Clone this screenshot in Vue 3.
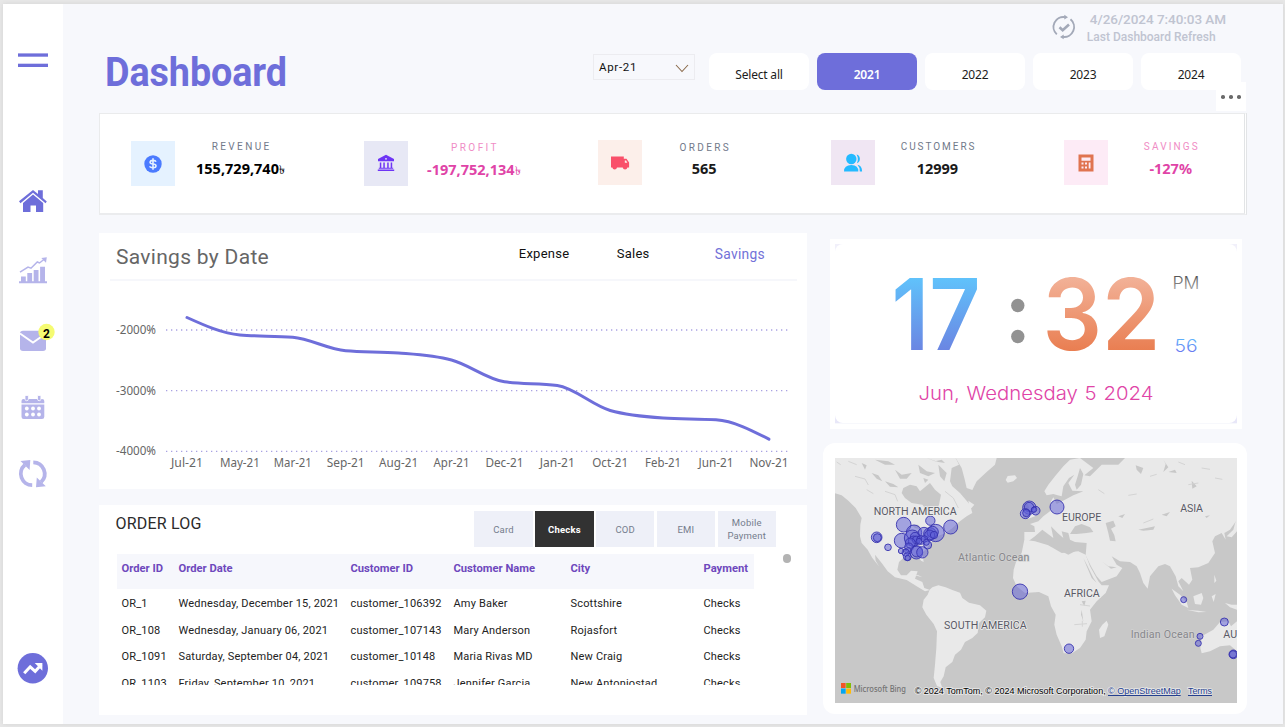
<script setup>
const years = ['Select all', '2021', '2022', '2023', '2024']

const kpis = [
  { icon: 'coin', label: 'REVENUE', value: '155,729,740', taka: true, tone: 'ink' },
  { icon: 'bank', label: 'PROFIT', value: '-197,752,134', taka: true, tone: 'pink' },
  { icon: 'truck', label: 'ORDERS', value: '565', tone: 'ink' },
  { icon: 'people', label: 'CUSTOMERS', value: '12999', tone: 'ink' },
  { icon: 'calc', label: 'SAVINGS', value: '-127%', tone: 'pink' },
]

const points = [
  { label: 'Jul-21', w: 32, y: 317.5 },
  { label: 'May-21', w: 40, y: 335 },
  { label: 'Mar-21', w: 38, y: 337.3 },
  { label: 'Sep-21', w: 38, y: 350.8 },
  { label: 'Aug-21', w: 39, y: 353 },
  { label: 'Apr-21', w: 36, y: 360 },
  { label: 'Dec-21', w: 38, y: 381.8 },
  { label: 'Jan-21', w: 35, y: 385.6 },
  { label: 'Oct-21', w: 36, y: 410.5 },
  { label: 'Feb-21', w: 36, y: 418 },
  { label: 'Jun-21', w: 35, y: 419.8 },
  { label: 'Nov-21', w: 39, y: 439.2 },
].map((p, i) => ({ ...p, x: 187 + i * 52.9 }))

// Monotone cubic interpolation through the points
function smooth(pts) {
  const n = pts.length
  const s = []
  for (let i = 0; i < n - 1; i++) s.push((pts[i + 1].y - pts[i].y) / (pts[i + 1].x - pts[i].x))
  const m = pts.map((_, i) => {
    if (i === 0 || i === n - 1) return null
    const a = s[i - 1]
    const b = s[i]
    if (a * b <= 0) return 0
    return Math.sign(a) * 2 * Math.min(Math.abs(a), Math.abs(b), Math.abs(a + b) / 4)
  })
  m[0] = (3 * s[0] - m[1]) / 2
  m[n - 1] = (3 * s[n - 2] - m[n - 2]) / 2
  let d = `M${pts[0].x},${pts[0].y}`
  for (let i = 1; i < n; i++) {
    const h = (pts[i].x - pts[i - 1].x) / 3
    d += `C${pts[i - 1].x + h},${pts[i - 1].y + m[i - 1] * h} ${pts[i].x - h},${pts[i].y - m[i] * h} ${pts[i].x},${pts[i].y}`
  }
  return d
}
const line = smooth(points)

const grid = [
  { y: 330, label: '-2000%' },
  { y: 390.6, label: '-3000%' },
  { y: 451.3, label: '-4000%' },
]

const methods = ['Card', 'Checks', 'COD', 'EMI', 'Mobile Payment']
const columns = ['Order ID', 'Order Date', 'Customer ID', 'Customer Name', 'City', 'Payment']
const orders = [
  ['OR_1', 'Wednesday, December 15, 2021', 'customer_106392', 'Amy Baker', 'Scottshire', 'Checks'],
  ['OR_108', 'Wednesday, January 06, 2021', 'customer_107143', 'Mary Anderson', 'Rojasfort', 'Checks'],
  ['OR_1091', 'Saturday, September 04, 2021', 'customer_10148', 'Maria Rivas MD', 'New Craig', 'Checks'],
  ['OR_1103', 'Friday, September 10, 2021', 'customer_109758', 'Jennifer Garcia', 'New Antoniostad', 'Checks'],
]

const bubbles = [
  [206, 200, 22], [286, 188, 14], [347, 207, 21], [302, 225, 26], [125, 238, 16], [127, 239, 12], [159, 268, 10],
  [200, 248, 22], [237, 224, 23], [232, 240, 24], [267, 226, 18], [285, 228, 19], [293, 222, 17], [284, 231, 15],
  [297, 231, 11], [240, 237, 14], [236, 250, 16], [244, 246, 12], [226, 255, 15], [222, 268, 13], [258, 246, 13],
  [268, 243, 10], [252, 250, 9], [278, 261, 12], [274, 253, 9], [219, 279, 10], [212, 284, 11], [198, 279, 8],
  [217, 296, 12], [218, 300, 8], [244, 284, 19], [246, 280, 17], [262, 283, 17],
  [583, 149, 20], [582, 147, 14], [571, 167, 15], [574, 165, 11], [602, 158, 13], [597, 155, 8], [666, 147, 21],
  [555, 401, 23], [702, 572, 14], [1046, 425, 9], [1168, 492, 12], [1095, 535, 9], [1090, 556, 9],
  [1195, 589, 13], [1194, 589, 11],
]
</script>

<template>
  <div class="screen">
    <div class="frame">
      <nav class="side">
        <svg width="60" height="720" viewBox="3 4 60 720">
          <g fill="#6e6eda">
            <rect x="18" y="53.4" width="30" height="3.3" />
            <rect x="18" y="63.7" width="30" height="3.3" />
            <path d="M19 201.3 33 190l5 4V190.300h4.800V198l4 3.500-1.300 1.800L33 192.800l-12.500 10.400z" />
            <path d="M33 194.500 43.200 203v9H36v-6.500h-5.500V212H23v-9z" />
          </g>
          <g fill="#b5b4ea">
            <path d="M19 281.200h28v2H19zM21 276.500h4.800v6H21zM27.300 273h4.800v9h-4.800zM33.700 270h4.800v12h-4.800zM40.100 266.800h4.900v15h-4.900z" />
            <path d="M20 272.200 28 267l3 1.200 6.300-6.200 2.200 1 5-4" fill="none" stroke="#b5b4ea" stroke-width="1.500" />
            <path d="M41.300 258l5.500-.8-.8 5.600z" />
            <path d="M20 333.500q0-2.800 3-2.800h20q3 0 3 2.800v14.800q0 2.700-3 2.700H23q-3 0-3-2.700z" />
            <path d="M21.500 401q0-2 2-2H42q2.300 0 2.300 2v2.200H21.500zM21.500 404.500h22.800v12.300q0 2.200-2.300 2.200H23.700q-2.200 0-2.200-2.200z" />
            <path d="M25 395.500h3.400v3.700q0 1.500-1.700 1.500t-1.700-1.500zM37.500 395.500h3.400v3.700q0 1.500-1.700 1.500t-1.700-1.500z" stroke="#fff" stroke-width=".8" />
          </g>
          <path d="M20 333.500 33 342.500 46 333.500" fill="none" stroke="#fff" stroke-width="1.900" />
          <g fill="#fff">
            <circle cx="26.800" cy="408.500" r="1.900" /><circle cx="33" cy="408.500" r="1.900" /><circle cx="39" cy="408.500" r="1.900" />
            <circle cx="26.800" cy="414.500" r="1.900" /><circle cx="33" cy="414.500" r="1.900" /><circle cx="39" cy="414.500" r="1.900" />
          </g>
          <circle cx="46.500" cy="332" r="8.200" fill="#f5fb72" />
          <text class="badge" x="46.500" y="337.500" text-anchor="middle">2</text>
          <g fill="none" stroke="#b5b4ea" stroke-width="3.800">
            <path d="M32.200 485.200A11.500 11.500 0 0 1 24.800 465" />
            <path d="M33.300 462.300A11.500 11.500 0 0 1 41.200 482" />
          </g>
          <path d="M20.500 461 30.300 460 29.600 470zM45.800 486.200 36 487.300 36.800 477.500z" fill="#b5b4ea" />
          <circle cx="32.800" cy="668.200" r="15.200" fill="#6e6eda" />
          <path d="M24.200 673.300l6-6.500 5 4.500 6-6.500" fill="none" stroke="#fff" stroke-width="3" />
          <path d="M34.700 663h7.700v7.700z" fill="#fff" />
        </svg>
      </nav>

      <main class="main">
        <header class="head">
          <h1>Dashboard</h1>
          <div class="right">
            <div class="refresh">
              <svg width="24" height="26" viewBox="0 0 24 26">
                <g fill="none" stroke="#a3a9b8" stroke-width="1.900">
                  <path d="M4.800 20.400A10 10 0 0 1 13 3.100" /><path d="M18.500 5.300A10 10 0 0 1 11 22.900" />
                  <path d="M7.500 13.200l3.200 3 6.300-5.700" stroke-width="2.600" />
                </g>
                <path d="M12.300.8 16 3.200 12.300 5.500zM11.700 20.500 8 22.900l3.700 2.300z" fill="#a3a9b8" />
              </svg>
              <div>
                <p class="stamp">4/26/2024 7:40:03 AM</p>
                <p class="note">Last Dashboard Refresh</p>
              </div>
            </div>
            <div class="filters">
              <div class="select">
                <span>Apr-21</span>
                <svg width="14" height="9" viewBox="0 0 14 9"><path d="M1 1l6 6.500L13 1" fill="none" stroke="#8a6a4a" stroke-width="1.100" /></svg>
              </div>
              <button v-for="y in years" :key="y" class="year" :class="{ on: y === '2021' }">{{ y }}</button>
            </div>
          </div>
          <div class="more"><i></i><i></i><i></i></div>
        </header>

        <section class="kpis">
          <div v-for="k in kpis" :key="k.label" class="kpi" :class="k.icon">
            <div class="tile">
              <svg v-if="k.icon === 'coin'" width="18" height="18" viewBox="0 0 18 18">
                <circle cx="9" cy="9" r="8.700" fill="#4b7bff" />
                <path d="M12 6.700Q11.600 5.400 9 5.400T6.100 7.200Q6.100 8.800 9 9t3 1.900q0 1.700-3 1.700T5.900 11.200M9 3.300v11.400" fill="none" stroke="#e5f2ff" stroke-width="1.600" />
              </svg>
              <svg v-else-if="k.icon === 'bank'" width="18" height="18" viewBox="0 0 18 18">
                <path d="M9 .8 17 5v2.300H1V5zM2.800 8.400h1.500v5.400H2.800zM6.300 8.400h1.500v5.400H6.300zM10.200 8.400h1.500v5.400h-1.500zM13.700 8.400h1.500v5.400h-1.500zM1.800 13.800h14.400v1H1.800zM.8 15.600h16.400V17H.8z" fill="#6e35f5" />
                <circle cx="9" cy="4.800" r=".9" fill="#e7e8f5" />
              </svg>
              <svg v-else-if="k.icon === 'truck'" width="20" height="16" viewBox="0 0 20 16">
                <path d="M1 1.500h12.800v2.300h2.700l2.600 3.800v5h-1.700a2.400 2.400 0 0 1-4.700 0H7a2.400 2.400 0 0 1-4.700 0H1z" fill="#f9506a" />
                <path d="M14.800 5.500h1.300l1.300 2.200h-2.600z" fill="#fcefea" />
              </svg>
              <svg v-else-if="k.icon === 'people'" width="20" height="20" viewBox="0 0 20 20">
                <circle cx="8.300" cy="6" r="5.200" fill="#24baff" />
                <path d="M1 18.500q0-6.500 7.300-6.500t7 6.500z" fill="#24baff" />
                <path d="M13.600 1.600a4.600 4.600 0 0 1 .3 8.700q2-4.300-.3-8.700zM14.500 11.800q4.500.8 4.600 6.700h-2.300q0-4.400-2.300-6.700z" fill="#24baff" />
              </svg>
              <svg v-else width="16" height="18" viewBox="0 0 16 18">
                <rect x=".5" y=".5" width="15" height="17" fill="#e07450" />
                <path d="M3.500 3.500h9v3.300h-9zM3.500 8.500h2v2h-2zM7 8.500h2v2H7zM3.500 12.500h2v2h-2zM7 12.500h2v2H7zM10.700 8.500h1.800v6h-1.800z" fill="#fdebf4" />
              </svg>
            </div>
            <div class="fig" :class="k.tone">
              <p class="label">{{ k.label }}</p>
              <p class="value">{{ k.value }}<span v-if="k.taka" class="taka">৳</span></p>
            </div>
          </div>
        </section>

        <div class="body">
          <div class="col">
            <section class="card chart">
              <div class="chart-head">
                <h2>Savings by Date</h2>
                <div class="tabs"><span>Expense</span><span>Sales</span><span class="on">Savings</span></div>
              </div>
              <svg width="708" height="208" viewBox="99 281 708 208">
                <g v-for="g in grid" :key="g.y">
                  <path :d="`M166 ${g.y}H788`" stroke="#a9a2e2" stroke-width="1.300" stroke-dasharray="1.300 3.700" />
                  <text x="116" :y="g.y + 4" textLength="40" lengthAdjust="spacingAndGlyphs">{{ g.label }}</text>
                </g>
                <path :d="line" fill="none" stroke="#6e6eda" stroke-width="3" stroke-linecap="round" />
                <text v-for="p in points" :key="p.label" :x="p.x" y="467" text-anchor="middle" :textLength="p.w" lengthAdjust="spacingAndGlyphs">{{ p.label }}</text>
              </svg>
            </section>

            <section class="card log">
              <div class="log-head">
                <h3>ORDER LOG</h3>
                <div class="methods">
                  <button v-for="m in methods" :key="m" :class="{ on: m === 'Checks' }">{{ m }}</button>
                </div>
              </div>
              <div class="log-body">
                <div class="table">
                  <div class="row th"><span v-for="c in columns" :key="c">{{ c }}</span></div>
                  <div v-for="o in orders" :key="o[0]" class="row"><span v-for="(c, i) in o" :key="i">{{ c }}</span></div>
                </div>
                <i class="thumb"></i>
              </div>
            </section>
          </div>

          <div class="col2">
            <section class="clock">
              <div class="face">
                <svg width="402" height="179" viewBox="835.500 244 402 179">
                  <defs>
                    <linearGradient id="gh" gradientUnits="userSpaceOnUse" x1="0" y1="278" x2="0" y2="352"><stop offset="0" stop-color="#60c2fb" /><stop offset="1" stop-color="#6b84e2" /></linearGradient>
                    <linearGradient id="gm" gradientUnits="userSpaceOnUse" x1="0" y1="278" x2="0" y2="352"><stop offset="0" stop-color="#f2b197" /><stop offset="1" stop-color="#e97d50" /></linearGradient>
                    <linearGradient id="gp" gradientUnits="userSpaceOnUse" x1="0" y1="276" x2="0" y2="291"><stop offset="0" stop-color="#555" /><stop offset="1" stop-color="#aaa" /></linearGradient>
                    <linearGradient id="gs" gradientUnits="userSpaceOnUse" x1="0" y1="338" x2="0" y2="353"><stop offset="0" stop-color="#5cb4fc" /><stop offset="1" stop-color="#6b75f0" /></linearGradient>
                  </defs>
                  <text class="big" x="892" y="350" textLength="89" lengthAdjust="spacingAndGlyphs" fill="url(#gh)">17</text>
                  <circle cx="1018.300" cy="305.500" r="6.700" fill="#929292" />
                  <circle cx="1018.300" cy="336.500" r="6.700" fill="#929292" />
                  <text class="big" x="1043" y="349.500" textLength="118" lengthAdjust="spacingAndGlyphs" fill="url(#gm)">32</text>
                  <text class="thin" x="1173" y="289" textLength="27" lengthAdjust="spacingAndGlyphs" fill="url(#gp)">PM</text>
                  <text class="thin" x="1175" y="352" textLength="23" lengthAdjust="spacingAndGlyphs" fill="url(#gs)">56</text>
                  <text class="date" x="919" y="400" textLength="235" lengthAdjust="spacingAndGlyphs">Jun, Wednesday 5 2024</text>
                </svg>
              </div>
            </section>

            <section class="mapcard">
              <svg width="402" height="245" viewBox="0 0 1206 735">
                <rect width="1206" height="735" fill="#c8c8c8" />
                <g fill="#e9e9e9">
                  <path d="M0 0H362L372 20 350 30 345 70 352 85 375 105 405 140 412 165 395 175 368 195 350 212 325 228 305 235 290 252 278 268 262 285 266 312 258 308 248 292 225 292 205 300 192 312 187 335 198 352 215 352 228 338 248 340 240 362 262 372 268 390 285 396 270 400 245 385 215 366 180 358 158 340 140 315 120 290 122 308 132 325 112 300 98 275 80 255 75 235 76 200 80 180 62 150 40 128 20 112 0 106z" />
                  <path d="M362 0 380 30 388 60 395 90 412 96 425 70 455 42 480 20 485 0z" />
                  <path d="M512 66 518 54 540 52 546 60 535 70 518 74zM292 388 310 382 332 388 352 396 375 404 382 420 402 434 435 442 454 458 450 478 432 495 428 525 412 540 390 552 378 575 360 590 352 612 332 628 326 655 316 672 322 690 306 684 296 660 300 620 304 570 306 520 296 498 274 470 262 448 266 425 278 410 284 395z" />
                  <path d="M568 245 600 250 640 262 680 285 730 280 752 290 765 325 790 370 800 382 822 382 812 405 785 430 765 455 770 490 755 520 752 545 735 570 712 585 686 586 680 565 665 530 658 500 662 470 648 445 640 415 612 402 570 405 545 385 534 360 536 335 545 305 560 285z" />
                  <path d="M568 222 600 222 598 205 585 198 610 190 625 175 645 160 648 130 655 118 665 138 690 125 715 112 745 100 712 98 700 75 718 50 702 60 685 85 680 115 668 112 655 108 635 112 628 100 640 80 660 55 685 25 705 5 735 0 775 30 748 52 765 55 800 20 850 20 870 0H1206V185L1185 215 1168 225 1172 245 1160 225 1140 235 1132 250 1140 285 1120 315 1090 328 1065 330 1072 365 1062 380 1040 360 1030 370 1045 400 1030 385 1022 355 1005 325 990 318 970 325 945 355 938 392 925 375 915 345 905 325 885 312 855 310 830 295 845 320 862 330 845 355 800 372 785 355 768 325 752 292 755 255 720 252 705 245 700 225 680 220 685 240 668 225 648 205 655 240 635 225 622 215 600 235 580 250 568 245z" />
                  <path d="M580 182 600 175 608 160 592 140 588 128 575 132 582 148 575 168zM555 160 568 150 575 165 560 178zM815 488 820 500 808 535 795 540 792 515 802 500zM1010 392 1035 410 1055 432 1060 450 1040 440 1020 412zM1075 415 1100 405 1105 420 1098 440 1080 438zM1055 455 1090 458 1115 462 1090 463zM1170 435 1190 440 1206 440V455L1185 448zM1100 535 1135 515 1155 492 1180 490 1188 505 1206 490V580L1185 562 1155 565 1125 580 1100 586 1096 570z" />
                  <path d="M222 348 250 352 262 358 240 352zM1130 415 1142 408 1136 432zM1138 350 1144 368 1138 375zM400 128 418 140 405 155zM1175 235 1195 215 1206 175V220L1190 238z" />
                </g>
                <g fill="#c8c8c8">
                  <path d="M205 90 225 80 245 85 255 100 285 75 300 95 318 110 312 140 300 165 278 160 262 140 230 135 210 120 200 105z" />
                  <path d="M110 45 130 52 142 70 125 62zM150 70 175 78 190 88 165 86zM180 35 200 50 230 45 215 62 195 62zM250 20 275 40 300 45 280 55 255 45zM310 20 335 45 328 70 315 55zM80 15 95 22 90 35zM120 5 160 10 180 20 150 20zM265 60 280 65 270 75zM230 200 250 200 262 215 240 210zM275 0 300 10 320 5 330 15 310 12z" />
                  <path d="M705 228 720 205 740 198 765 208 775 222 755 225 725 228zM812 195 835 188 842 205 828 212 838 232 842 250 825 248 820 225zM745 300 758 325 775 360 785 374 770 360 755 325zM800 310 820 325 845 328 828 332zM640 262 690 262 720 280 700 290 660 270zM735 30 745 48 738 80 725 95 720 80 728 55z" />
                  <path d="M740 430 752 428 748 445zM740 455 745 490 738 470zM850 175 870 168 862 180zM910 215 960 205 955 215 925 218zM980 170 1005 162 995 175zM1070 68 1085 85 1072 92zM985 5 1000 28 985 42 992 18zM902 22 925 30 918 48 905 35zM1110 175 1125 172 1115 180zM1000 42 1020 35 1025 45z" />
                </g>
                <g fill="none" stroke="#d4d4d4" stroke-width="3">
                  <path d="M5 12l12 8M40 10l25 10M60 55l30 8 10 18M150 100l30 10 8 20M95 95l20 12M330 100l25 20 15 30M1030 12l20 8M1100 30l25 4M945 55l20-6M880 112l25-4M1060 80l30-5M790 95l18 12M925 195l30-12M1140 60l22 4M735 440l30 4M718 500l38-3M742 488v18" />
                </g>
                <g fill="#5c5cd6" fill-opacity=".5" stroke="#342fae" stroke-width="2.600">
                  <circle v-for="(b, i) in bubbles" :key="i" :cx="b[0]" :cy="b[1]" :r="b[2]" />
                </g>
                <g class="land">
                  <text x="116" y="172" textLength="249">NORTH AMERICA</text>
                  <text x="327" y="514" textLength="248">SOUTH AMERICA</text>
                  <text x="681" y="189" textLength="118">EUROPE</text>
                  <text x="1036" y="161" textLength="68">ASIA</text>
                  <text x="687" y="418" textLength="107">AFRICA</text>
                  <text x="1165" y="540">AU</text>
                </g>
                <g class="sea">
                  <text x="369" y="308" textLength="214">Atlantic Ocean</text>
                  <text x="887" y="539" textLength="192">Indian Ocean</text>
                </g>
                <path d="M18 675h14v15H18z" fill="#f35325" /><path d="M33.500 675H48v15H33.500z" fill="#81bc06" />
                <path d="M18 691.500h14V707H18z" fill="#05a6f0" /><path d="M33.500 691.500H48V707H33.500z" fill="#ffba08" />
                <text class="bing" x="56" y="701" textLength="157" lengthAdjust="spacingAndGlyphs">Microsoft Bing</text>
                <g class="copy">
                  <text x="239" y="708" textLength="573" lengthAdjust="spacingAndGlyphs">© 2024 TomTom, © 2024 Microsoft Corporation,</text>
                  <text class="link" x="819" y="708" textLength="218" lengthAdjust="spacingAndGlyphs">© OpenStreetMap</text>
                  <text class="link" x="1059" y="708" textLength="72" lengthAdjust="spacingAndGlyphs">Terms</text>
                </g>
                <path d="M819 712.500H1037M1059 712.500H1131" stroke="#25408f" stroke-width="3" />
              </svg>
            </section>
          </div>
        </div>
      </main>
    </div>
  </div>
</template>

<style>
body { margin: 0; overflow: hidden; }
</style>

<style scoped>
.screen, .screen * { box-sizing: border-box; }
.screen { width: 1285px; height: 727px; padding: 4px 2px 3px 3px; background: #e7e7e7; font-family: Roboto, "Liberation Sans", sans-serif; overflow: hidden; }
h1, h2, h3, p { margin: 0; font-weight: 400; }
button { border: 0; padding: 0; font: inherit; color: inherit; }
svg { display: block; }
.frame { display: flex; width: 1280px; height: 720px; background: #f7f8fc; box-shadow: 0 0 4px #d2d2d2; }
.side { flex: none; width: 60px; background: #fff; }
.badge { font: 700 12px Roboto, sans-serif; }
.main { flex: 1; min-width: 0; padding: 0 36px; display: flex; flex-direction: column; }

.head { position: relative; height: 109px; display: flex; justify-content: space-between; padding-left: 6px; }
h1 { font: 700 40.500px/48px Roboto, sans-serif; color: #6e6eda; margin-top: 44px; letter-spacing: -.1px; transform: scaleX(.932); transform-origin: left; }
.right { display: flex; flex-direction: column; align-items: flex-end; padding-right: 6px; }
.refresh { display: flex; gap: 11px; height: 49px; padding: 7px 15px 0 0; color: #c0c4d1; }
.refresh svg { margin-top: 3px; }
.refresh p { white-space: nowrap; font-weight: 500; }
.stamp { font-size: 13.500px; line-height: 17px; margin-left: 3px; letter-spacing: -.05px; }
.note { font-size: 12px; line-height: 18px; letter-spacing: 0; }
.filters { display: flex; gap: 8px; }
.select { display: flex; justify-content: space-between; align-items: center; width: 102px; height: 26px; margin: 1px 6px 0 0; padding: 0 5px; border: 1px solid #ececf0; font-size: 11.500px; letter-spacing: .7px; color: #111; }
.select span { margin-top: -1px; }
.select svg { margin-top: 3px; }
.year { width: 100px; height: 37px; padding-top: 5px; border-radius: 8px; background: #fff; font: 12px "Noto Sans", sans-serif; letter-spacing: -.2px; color: #1c1c1c; }
.year.on { background: #6e6eda; color: #fff; font-weight: 600; }
.more { position: absolute; right: 1px; top: 78px; width: 30px; height: 29px; background: #fff; display: flex; justify-content: center; gap: 4.500px; padding-top: 13px; }
.more i { width: 3.500px; height: 3.500px; border-radius: 50%; background: #6a6a6a; }

.kpis { display: flex; height: 102px; padding: 26px 0 0 31px; background: #fff; border: 1px solid #eaebec; border-right: 3px double #e2e4e6; border-bottom: 2px solid #ebecee; }
.kpi { display: flex; flex: 0 0 233.300px; padding-top: 1px; }
.kpi.calc { flex: 0 0 170px; }
.tile { width: 44px; height: 45px; margin-top: -1px; display: flex; align-items: center; justify-content: center; }
.coin .tile { background: #e5f2ff; }
.bank .tile { background: #e7e8f5; }
.bank .tile svg { margin-top: -2px; }
.truck .tile { background: #fcefea; }
.people .tile { background: #f0e6f3; }
.calc .tile { background: #fdebf6; }
.coin, .bank { padding-top: 2px; }
.fig { width: 131px; text-align: center; color: #1a1a1a; }
.truck .fig, .people .fig, .calc .fig { width: 125px; }
.label { font-size: 10px; line-height: 12px; letter-spacing: 2.400px; margin-right: -2.400px; color: #71798a; }
.people .label { letter-spacing: 1.950px; }
.calc .label { letter-spacing: 2.150px; }
.truck .label { margin-top: 1px; }
.value { font: 700 14.500px/20px "Noto Sans", sans-serif; margin-top: 5px; white-space: nowrap; letter-spacing: 0; }
.truck .value { margin-top: 4px; }
.coin .fig { margin-top: -1px; }
.coin .value { color: #000; }
.pink .value { color: #e044a7; }
.pink .label { color: #f08cc5; }
.taka { font-size: 12px; font-weight: 400; }

.body { display: flex; gap: 16px; margin-top: 18px; }
.col { width: 708px; display: flex; flex-direction: column; gap: 16px; }
.card { background: #fff; }
.chart { height: 256px; }
.chart-head { display: flex; justify-content: space-between; height: 48px; margin: 0 10px 0 11px; padding: 0 32px 0 6px; border-bottom: 2px solid #f6f7fb; }
h2 { font-size: 21px; line-height: 48px; letter-spacing: .3px; color: #666; }
.tabs { display: flex; font-size: 13px; line-height: 42px; letter-spacing: .25px; color: #111; }
.tabs span { width: 98px; }
.tabs .on { width: auto; font-size: 13.800px; color: #7271d8; letter-spacing: .3px; }
.chart text { font: 12px "Noto Sans", sans-serif; fill: #666; }

.log { height: 210px; }
.log-head { display: flex; justify-content: space-between; height: 49px; padding: 6px 31px 0 16.500px; }
h3 { font-size: 16px; line-height: 25px; letter-spacing: .2px; color: #2b2b2b; }
.methods { display: flex; gap: 2.300px; }
.methods button { width: 58.500px; height: 36px; padding: 0 6px; background: #eef0f8; font-size: 9.500px; line-height: 13px; letter-spacing: .2px; color: #757d8d; }
.methods .on { background: #323232; color: #fff; font-weight: 700; }
.log-body { display: flex; justify-content: space-between; height: 131px; overflow: hidden; padding: 0 16px 0 18px; }
.table { width: 637px; font-size: 11px; color: #222; letter-spacing: .18px; }
.row { display: grid; grid-template-columns: 57px 172px 103px 117px 133px 55px; height: 26.600px; align-items: center; white-space: nowrap; }
.row span { padding-left: 4.500px; }
.th { height: 35px; background: #f6f7fc; margin-bottom: 1.300px; padding-bottom: 7px; font-weight: 700; font-size: 11.200px; color: #6e48bd; letter-spacing: 0; }
.thumb { width: 8px; height: 9px; border-radius: 4px; background: #b3b3b3; }

.col2 { width: 424px; }
.clock { margin: 6px 5px 0 7px; height: 190px; padding: 5px 5px 6px; background: #fff linear-gradient(#f1f0fa, #e8e7f8) content-box no-repeat; outline: 5px solid #fff; outline-offset: -5px; }
.face { background: #fff; border-radius: 8px; }
.big { font: 600 99.500px Inter, sans-serif; }
.thin { font: 300 17px Inter, sans-serif; }
.date { font: 300 18.500px Inter, sans-serif; fill: #e044a7; word-spacing: 1px; }
.mapcard { margin-top: 14px; height: 271px; padding: 15px 10px 11px 12px; background: #fff; border-radius: 12px; }
.mapcard text { font-family: Roboto, sans-serif; }
.land { font-size: 32px; fill: #5a5a66; stroke: #ededed; stroke-width: 5px; paint-order: stroke; stroke-linejoin: round; }
.sea { font-size: 32px; fill: #87878c; stroke: #d3d3d3; stroke-width: 4px; paint-order: stroke; }
.mapcard .bing { font: 500 26px "Noto Sans", sans-serif; fill: #737373; }
.mapcard .copy text { font: 27px "Liberation Sans", sans-serif; fill: #000; stroke: #e8e8e8; stroke-width: 5px; paint-order: stroke; }
.mapcard .copy .link { fill: #25408f; }
</style>
